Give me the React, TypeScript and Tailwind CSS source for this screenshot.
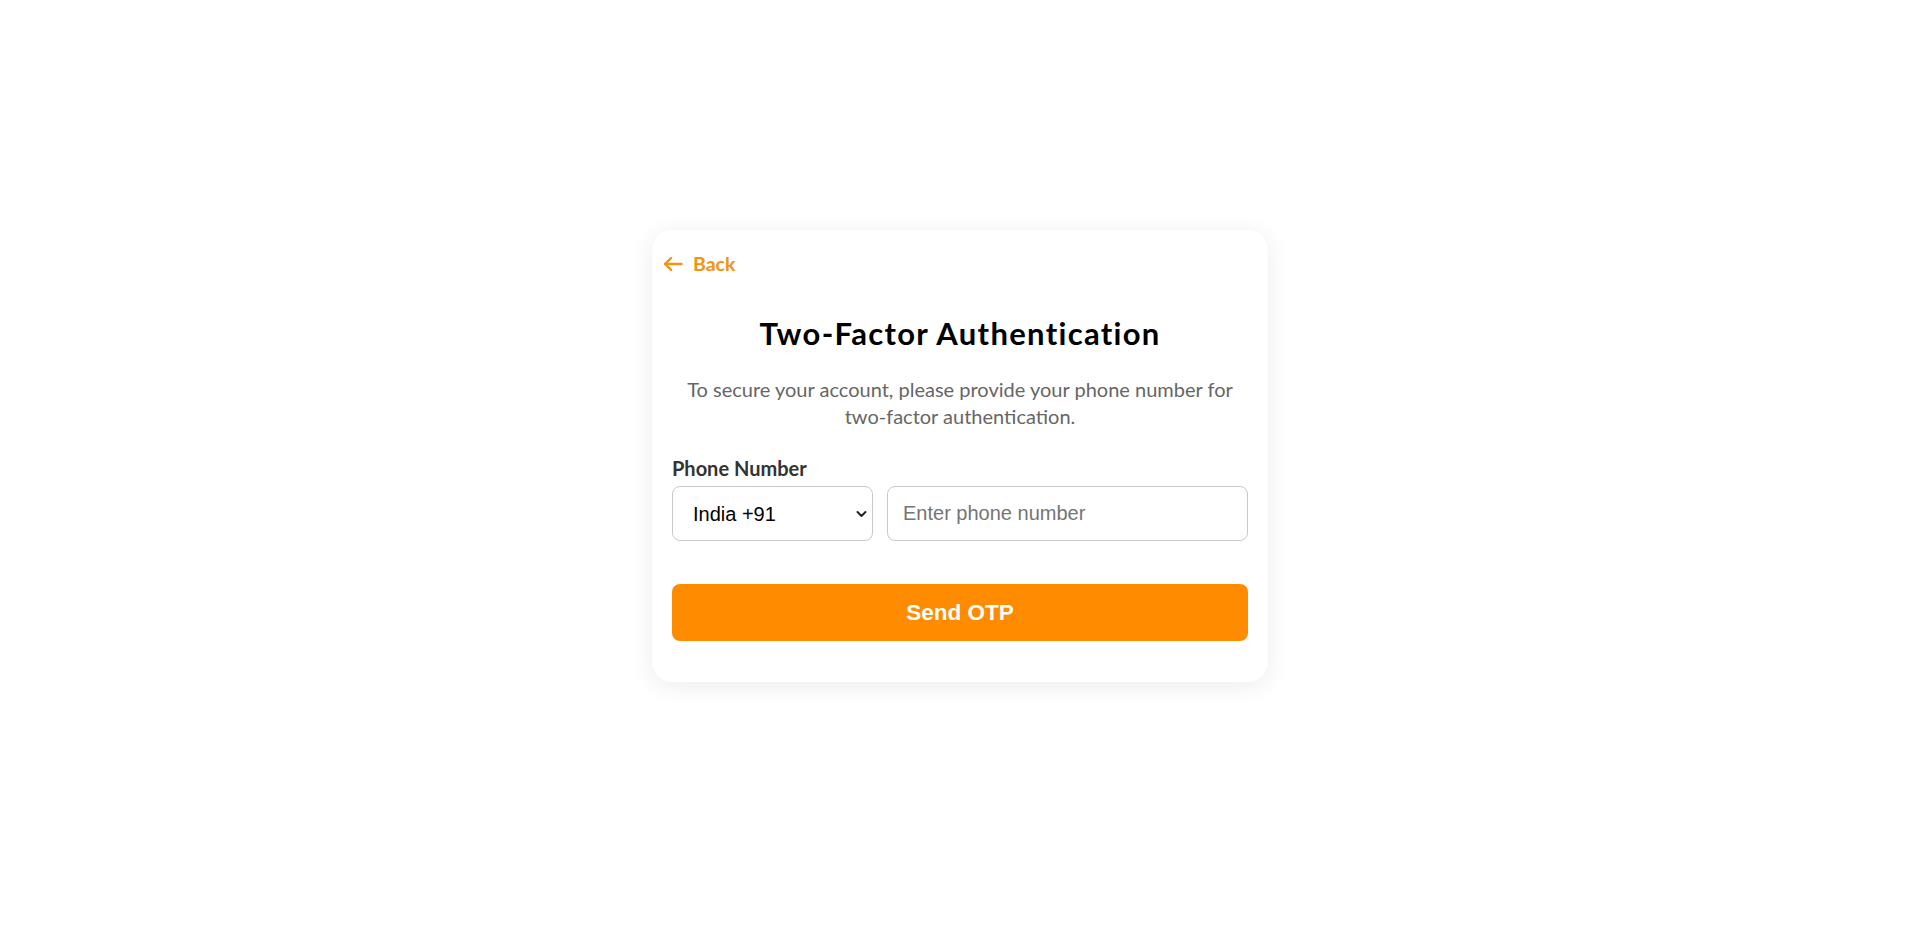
import React, { useState } from 'react';

const countries = [
  { code: '+91', name: 'India' },
  { code: '+1', name: 'USA' },
  { code: '+44', name: 'UK' },
  { code: '+61', name: 'Australia' },
];

const BackArrow: React.FC = () => (
  <svg width="20" height="14" viewBox="0 0 20 14" fill="none" stroke="currentColor" strokeWidth="2.4" strokeLinecap="round" strokeLinejoin="round">
    <path d="M18.5 7H2" />
    <path d="M8 1.2 2 7l6 5.8" />
  </svg>
);

const Chevron: React.FC = () => (
  <svg width="11" height="7" viewBox="0 0 11 7" fill="none" stroke="#222" strokeWidth="2" strokeLinecap="round" strokeLinejoin="round">
    <path d="M1.5 1.5 5.5 5.5 9.5 1.5" />
  </svg>
);

const App: React.FC = () => {
  const [country, setCountry] = useState('+91');
  const [phone, setPhone] = useState('');

  return (
    <div className="min-h-screen bg-white flex items-center justify-center pb-[20px] font-['Lato','Noto_Sans',sans-serif]">
      <div className="w-[616px] bg-white rounded-[20px] shadow-[0_4px_24px_rgba(0,0,0,0.08)] px-5 pt-[22px] pb-[41px]">
        {/* Back link */}
        <button className="flex items-center gap-[10px] -ml-[9px] h-6 text-[#f39314] text-[19.5px] font-bold leading-6">
          <BackArrow />
          <span>Back</span>
        </button>

        <h1 className="mt-[39px] text-center text-[31px] leading-[36px] font-bold tracking-[1.3px] text-black">
          Two-Factor Authentication
        </h1>

        <p className="mt-[25px] text-center text-[20px] leading-[27px] text-[#666]">
          To secure your account, please provide your phone number for
          <br />
          two-factor authentication.
        </p>

        <label htmlFor="phone" className="block mt-[26px] text-[20px] leading-6 font-bold text-[#333]">
          Phone Number
        </label>
        <div className="mt-[6px] flex gap-[14px]">
          <div className="relative w-[201px] shrink-0">
            <select
              value={country}
              onChange={(e) => setCountry(e.target.value)}
              className="appearance-none w-full h-[55px] pl-[20px] pr-8 rounded-[8px] border border-[#c9c9c9] bg-white text-black text-[20px] font-['Liberation_Sans',Arial,sans-serif] outline-none"
            >
              {countries.map((c) => (
                <option key={c.code} value={c.code}>
                  {c.name} {c.code}
                </option>
              ))}
            </select>
            <span className="pointer-events-none absolute right-[6px] top-1/2 -translate-y-1/2 flex">
              <Chevron />
            </span>
          </div>
          <input
            id="phone"
            type="tel"
            value={phone}
            onChange={(e) => setPhone(e.target.value)}
            placeholder="Enter phone number"
            className="flex-1 min-w-0 h-[55px] px-[15px] rounded-[8px] border border-[#c9c9c9] bg-white text-[20px] text-black placeholder:text-[#757575] font-['Liberation_Sans',Arial,sans-serif] outline-none"
          />
        </div>

        <button className="mt-[43px] w-full h-[57px] rounded-[8px] bg-[#ff8c00] text-white text-[22.5px] font-bold font-['Liberation_Sans',Arial,sans-serif]">
          Send OTP
        </button>
      </div>
    </div>
  );
};

export default App;
